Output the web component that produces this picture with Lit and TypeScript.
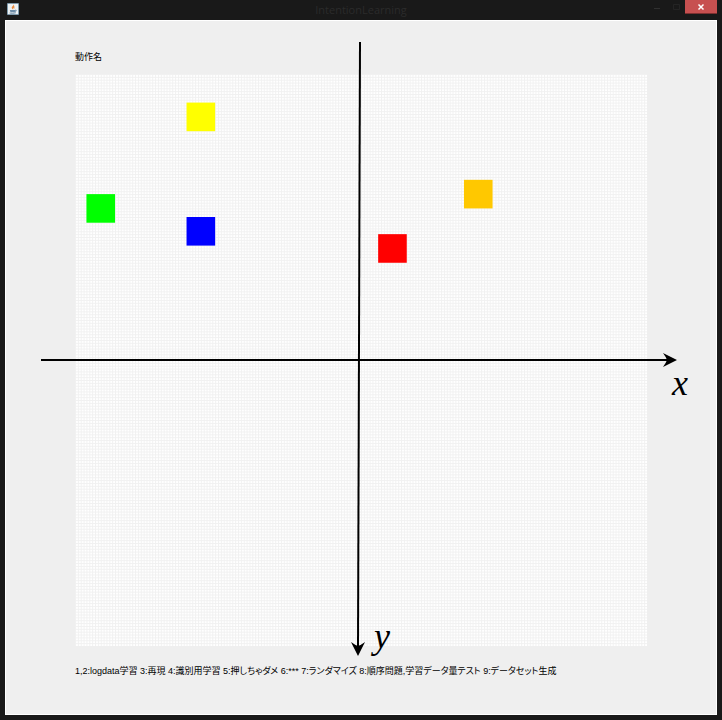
import { LitElement, html, css, svg } from "lit";
import { customElement } from "lit/decorators.js";

interface Block {
  x: number;
  y: number;
  color: string;
}

// Positions are in board cells; the board is 200 by 200 cells.
const BLOCKS: Block[] = [
  { x: 39, y: 10, color: "#ffff00" },
  { x: 4, y: 42, color: "#00ff00" },
  { x: 39, y: 50, color: "#0000ff" },
  { x: 106, y: 56, color: "#ff0000" },
  { x: 136, y: 37, color: "#ffc800" },
];

@customElement("title-bar")
export class TitleBar extends LitElement {
  static styles = css`
    :host {
      display: grid;
      grid-template-columns: 1fr auto 1fr;
      height: 20px;
      background: #191919;
      font-family: "Open Sans", "Noto Sans", sans-serif;
    }
    .icon {
      display: block;
      width: 12px;
      height: 12px;
      margin: 3px 0 0 7px;
    }
    .title {
      margin: 0;
      color: #2b2b2b;
      font-size: 11px;
      font-weight: 400;
      line-height: 20px;
    }
    .controls {
      display: flex;
      justify-content: flex-end;
      padding-right: 5px;
    }
    button {
      width: 19px;
      height: 14px;
      padding: 0;
      border: 0;
      background: none;
      color: #303030;
    }
    .close {
      width: 32px;
      background: #c75050;
      color: #ffffff;
      border-bottom: 1px solid #7d3030;
    }
    .glyph {
      display: block;
      width: 8px;
      height: 8px;
      margin: auto;
    }
  `;

  render() {
    return html`
      <svg class="icon" viewBox="0 0 12 12" aria-hidden="true">
        <rect width="12" height="12" rx="1" fill="#7f9aac" />
        <rect x="1" y="1" width="10" height="10" fill="#eef2f4" />
        <path d="M6.5 1C7.2 3 3.8 3.6 5 5.5L6 6.6C5.8 5 8.2 4.2 7 2.4Z" fill="#e8893c" />
        <path d="M7.8 3.4C6.2 4.4 7.4 5.2 6.5 6.4C8 5.8 7 4.8 7.8 3.4Z" fill="#f0a060" />
        <path d="M2.8 7H8V8.2Q8 9.3 7 9.3H4.2Q3 9.3 2.8 7Z" fill="#6b8ba6" />
        <path d="M8 7.2Q9.8 7 9.2 8T7.6 8.8M2.6 10Q5.5 10.7 8.8 9.8" fill="none" stroke="#5d7f9c" stroke-width="0.9" />
      </svg>
      <h1 class="title">IntentionLearning</h1>
      <div class="controls">
        <button type="button" aria-label="Minimize">
          <svg class="glyph" viewBox="0 0 8 8"><path d="M1 5.5H7" stroke="currentColor" /></svg>
        </button>
        <button type="button" aria-label="Maximize">
          <svg class="glyph" viewBox="0 0 8 8">
            <path d="M1.5 1.5H7.5V6.5H1.5Z" fill="none" stroke="#242424" />
          </svg>
        </button>
        <button class="close" type="button" aria-label="Close">
          <svg class="glyph" viewBox="0 0 8 8">
            <path d="M1.5 1.5L6.5 6.5M6.5 1.5L1.5 6.5" stroke="currentColor" stroke-width="1.5" />
          </svg>
        </button>
      </div>
    `;
  }
}

@customElement("plot-board")
export class PlotBoard extends LitElement {
  static styles = css`
    :host {
      display: block;
    }
    .board {
      display: block;
      width: 100%;
      overflow: visible;
    }
    .axis {
      stroke: #000000;
      stroke-width: 2px;
    }
    .name {
      font-family: "Liberation Serif", serif;
      font-style: italic;
      font-size: 36px;
    }
  `;

  render() {
    return html`
      <svg class="board" viewBox="0 0 572 572" role="img" aria-label="x y">
        <defs>
          <pattern id="cells" width="1" height="1" patternUnits="userSpaceOnUse">
            <rect width="1" height="1" fill="#ffffff" />
            <path d="M0 0.17H1M0.17 0V1" stroke="#f1f1f1" stroke-width="0.34" />
          </pattern>
        </defs>
        <svg width="572" height="572" viewBox="0 0 200 200">
          <rect width="200" height="200" fill="url(#cells)" />
          ${BLOCKS.map((b) => svg`<rect x=${b.x} y=${b.y} width="10" height="10" fill=${b.color} />`)}
        </svg>
        <path class="axis" d="M-34 286H594" />
        <path class="axis" d="M285 -32L283 574" />
        <path d="M602 286L588 279Q591 283 592 286Q591 289 588 293Z" />
        <path d="M283 582L276 568Q280 571 283 572Q286 571 290 568Z" />
        <text class="name" x="597" y="321">x</text>
        <text class="name" x="299" y="574">y</text>
      </svg>
    `;
  }
}

@customElement("app-root")
export class AppRoot extends LitElement {
  static styles = css`
    :host {
      display: flex;
      flex-direction: column;
      box-sizing: border-box;
      min-height: 100vh;
      padding-bottom: 5px;
      background: #191919;
    }
    .panel {
      flex: 1;
      margin: 0 5px;
      padding: 29px 69px 12px;
      border: 1px solid #ffffff;
      background: #efefef;
      color: #000000;
      font-family: "Liberation Sans", "Noto Sans CJK JP", sans-serif;
      font-size: 9px;
      font-feature-settings: "palt";
      line-height: 14px;
    }
    .line {
      margin: 0;
      white-space: nowrap;
    }
    plot-board {
      margin: 10px 0 18px;
    }
  `;

  render() {
    return html`
      <title-bar></title-bar>
      <main class="panel">
        <p class="line">動作名</p>
        <plot-board></plot-board>
        <p class="line">1,2:logdata学習 3:再現 4:識別用学習 5:押しちゃダメ 6:*** 7:ランダマイズ 8:順序問題,学習データ量テスト 9:データセット生成</p>
      </main>
    `;
  }
}
